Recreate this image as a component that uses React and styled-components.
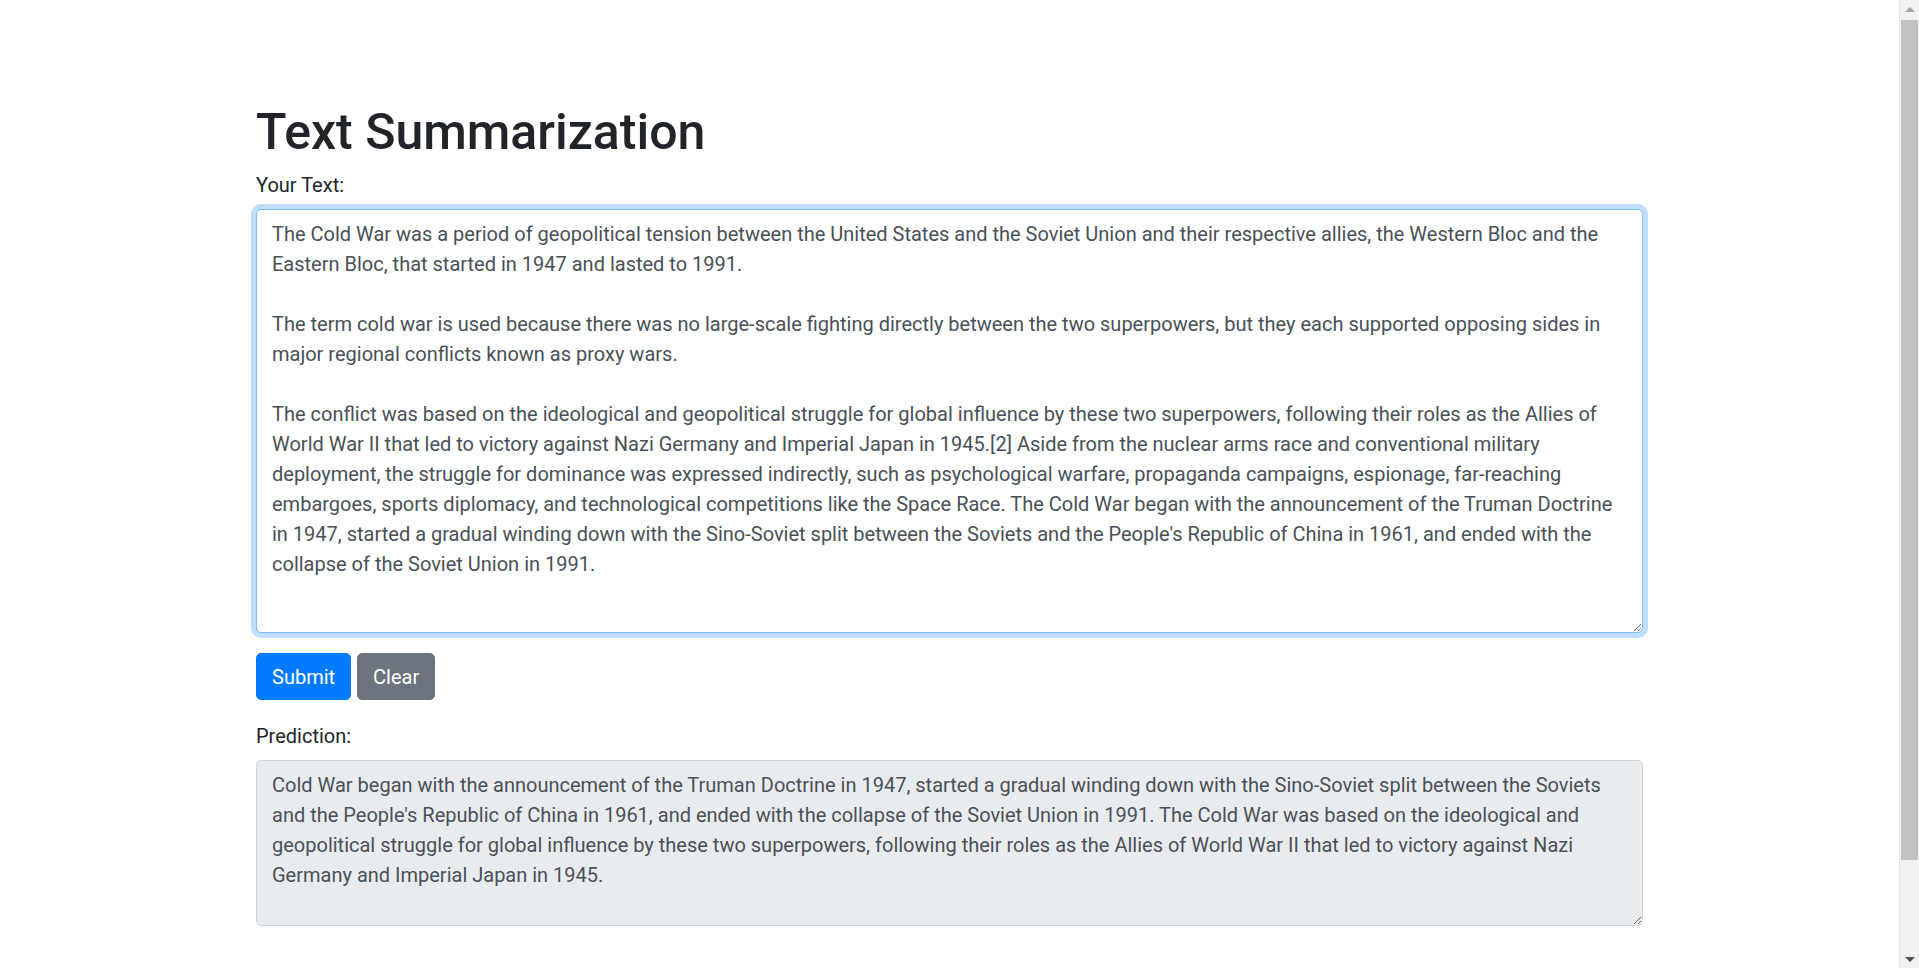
import React, { useState } from 'react';
import styled, { createGlobalStyle, css } from 'styled-components';

const GlobalStyle = createGlobalStyle`
  html, body {
    margin: 0;
    height: 100%;
    background: #fff;
  }
  body {
    font-family: Roboto, "Open Sans", sans-serif;
    font-size: 20px;
    line-height: 30px;
    color: #212529;
  }
  * { box-sizing: border-box; }
`;

const Page = styled.div`
  display: flex;
  height: 100vh;
  overflow: hidden;
`;

const Main = styled.main`
  flex: 1;
  overflow: hidden;
`;

const Container = styled.div`
  width: 1387px;
  margin: 0 auto;
  padding-top: 102px;
`;

const Title = styled.h1`
  margin: 0 0 8px;
  font-size: 50px;
  font-weight: 500;
  line-height: 60px;
  color: #212529;
`;

const FormGroup = styled.div`
  margin-bottom: 20px;
`;

const Label = styled.label`
  display: block;
  margin-bottom: 9px;
  font-size: 20px;
  line-height: 30px;
`;

const TextArea = styled.textarea`
  display: block;
  width: 100%;
  height: ${p => p.$height}px;
  padding: 8.5px 15px;
  font-family: Roboto, "Open Sans", sans-serif;
  font-size: 20px;
  line-height: 30px;
  color: #495057;
  background: #fff;
  border: 1px solid #ced4da;
  border-radius: 5px;
  resize: vertical;
  outline: none;

  ${p => p.$focused && css`
    border-color: #80bdff;
    box-shadow: 0 0 0 5px rgba(0, 123, 255, 0.25);
  `}

  ${p => p.readOnly && css`
    background: #e9ecef;
  `}
`;

const ButtonRow = styled.div`
  display: flex;
  gap: 6px;
  margin-bottom: 21px;
`;

const Button = styled.button`
  padding: 7.5px 15px;
  font-family: Roboto, "Open Sans", sans-serif;
  font-size: 20px;
  line-height: 30px;
  color: #fff;
  background: ${p => (p.$variant === 'secondary' ? '#6c757d' : '#007bff')};
  border: 1px solid ${p => (p.$variant === 'secondary' ? '#6c757d' : '#007bff')};
  border-radius: 5px;
  cursor: pointer;
`;

const ScrollTrack = styled.div`
  display: flex;
  flex-direction: column;
  width: 20px;
  height: 100vh;
  background: #f1f1f1;
  border-left: 1px solid #e8e8e8;
`;

const Arrow = styled.div`
  display: flex;
  align-items: center;
  justify-content: center;
  height: 18px;

  &::before {
    content: '';
    border-left: 5px solid transparent;
    border-right: 5px solid transparent;
    ${p => p.$dir === 'up'
      ? css`border-bottom: 5px solid #a3a3a3;`
      : css`border-top: 5px solid #505050;`}
  }
`;

const Thumb = styled.div`
  height: 840px;
  margin: 2px 1px 0 1px;
  background: #c1c1c1;
`;

const Spacer = styled.div`
  flex: 1;
`;

const sourceText = `The Cold War was a period of geopolitical tension between the United States and the Soviet Union and their respective allies, the Western Bloc and the Eastern Bloc, that started in 1947 and lasted to 1991.

The term cold war is used because there was no large-scale fighting directly between the two superpowers, but they each supported opposing sides in major regional conflicts known as proxy wars.

The conflict was based on the ideological and geopolitical struggle for global influence by these two superpowers, following their roles as the Allies of World War II that led to victory against Nazi Germany and Imperial Japan in 1945.[2] Aside from the nuclear arms race and conventional military deployment, the struggle for dominance was expressed indirectly, such as psychological warfare, propaganda campaigns, espionage, far-reaching embargoes, sports diplomacy, and technological competitions like the Space Race. The Cold War began with the announcement of the Truman Doctrine in 1947, started a gradual winding down with the Sino-Soviet split between the Soviets and the People's Republic of China in 1961, and ended with the collapse of the Soviet Union in 1991.`;

const predictionText = `Cold War began with the announcement of the Truman Doctrine in 1947, started a gradual winding down with the Sino-Soviet split between the Soviets and the People's Republic of China in 1961, and ended with the collapse of the Soviet Union in 1991. The Cold War was based on the ideological and geopolitical struggle for global influence by these two superpowers, following their roles as the Allies of World War II that led to victory against Nazi Germany and Imperial Japan in 1945.`;

export default function App() {
  const [text, setText] = useState(sourceText);

  return (
    <Page>
      <GlobalStyle />
      <Main>
        <Container>
          <Title>Text Summarization</Title>
          <FormGroup>
            <Label htmlFor="text">Your Text:</Label>
            <TextArea
              id="text"
              $height={424}
              $focused
              value={text}
              onChange={e => setText(e.target.value)}
            />
          </FormGroup>
          <ButtonRow>
            <Button type="button">Submit</Button>
            <Button type="button" $variant="secondary" onClick={() => setText('')}>Clear</Button>
          </ButtonRow>
          <FormGroup>
            <Label htmlFor="prediction">Prediction:</Label>
            <TextArea id="prediction" $height={166} readOnly value={predictionText} />
          </FormGroup>
        </Container>
      </Main>
      <ScrollTrack>
        <Arrow $dir="up" />
        <Thumb />
        <Spacer />
        <Arrow $dir="down" />
      </ScrollTrack>
    </Page>
  );
}
